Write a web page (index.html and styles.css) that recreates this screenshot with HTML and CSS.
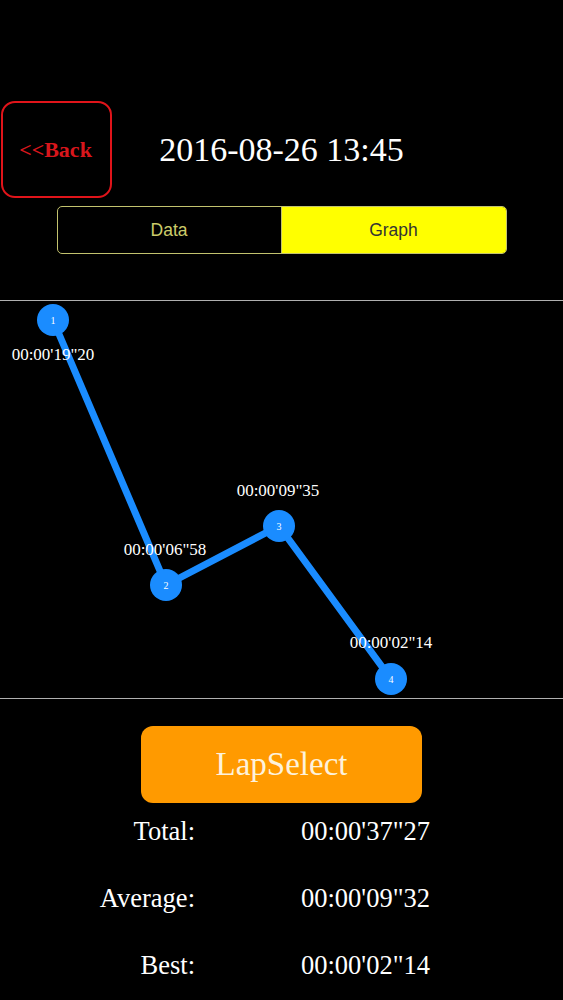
FILE: index.html
```html
<!DOCTYPE html>
<html>
<head>
<meta charset="utf-8">
<link rel="stylesheet" href="styles.css">
</head>
<body>
<div class="screen">
  <header class="header">
    <div class="back">&lt;&lt;Back</div>
    <h1 class="title">2016-08-26 13:45</h1>
    <div></div>
  </header>
  <div class="segment">
    <div class="seg seg-off">Data</div>
    <div class="seg seg-on">Graph</div>
  </div>
  <div class="chart">
    <svg class="chart-svg" width="563" height="397" viewBox="0 0 563 397">
      <polyline points="53,19 166,284 279,225 391,378" fill="none" stroke="#1a8cff" stroke-width="7" stroke-linejoin="round"/>
      <circle cx="53" cy="19" r="16" fill="#1a8cff"/>
      <circle cx="166" cy="284" r="16" fill="#1a8cff"/>
      <circle cx="279" cy="225" r="16" fill="#1a8cff"/>
      <circle cx="391" cy="378" r="16" fill="#1a8cff"/>
      <g class="num">
        <text x="53" y="23">1</text>
        <text x="166" y="288">2</text>
        <text x="279" y="229">3</text>
        <text x="391" y="382">4</text>
      </g>
      <g class="lbl">
        <text x="53" y="59">00:00'19"20</text>
        <text x="165" y="254">00:00'06"58</text>
        <text x="278" y="195">00:00'09"35</text>
        <text x="391" y="347">00:00'02"14</text>
      </g>
    </svg>
  </div>
  <div class="lap-btn">LapSelect</div>
  <div class="stats">
    <div class="stat-label">Total:</div><div class="stat-value">00:00'37"27</div>
    <div class="stat-label">Average:</div><div class="stat-value">00:00'09"32</div>
    <div class="stat-label">Best:</div><div class="stat-value">00:00'02"14</div>
  </div>
</div>
</body>
</html>
```
FILE: styles.css
```css
html, body {
  margin: 0;
  padding: 0;
  background: #000;
}
.screen {
  width: 563px;
  height: 1000px;
  background: #000;
  font-family: "Liberation Serif", serif;
  color: #fff;
  overflow: hidden;
}
.header {
  display: grid;
  grid-template-columns: 112px 1fr 112px;
  align-items: center;
  padding-top: 101px;
}
.back {
  box-sizing: border-box;
  margin-left: 1px;
  width: 111px;
  height: 97px;
  border: 2px solid #e0141a;
  border-radius: 14px;
  display: flex;
  align-items: center;
  justify-content: center;
  color: #d8161c;
  font-weight: bold;
  font-size: 22px;
  padding-right: 2px;
}
.title {
  margin: 0;
  text-align: center;
  font-weight: normal;
  font-size: 34px;
  line-height: 40px;
}
.segment {
  box-sizing: border-box;
  margin: 8px auto 0;
  width: 450px;
  height: 48px;
  border: 1px solid #c2c26e;
  border-radius: 5px;
  display: grid;
  grid-template-columns: 1fr 1fr;
  overflow: hidden;
  font-family: "Liberation Sans", Arial, sans-serif;
  font-size: 17.5px;
}
.seg {
  display: flex;
  align-items: center;
  justify-content: center;
}
.seg-off {
  color: #cccc6a;
  border-right: 1px solid #c2c26e;
}
.seg-on {
  background: #ffff00;
  color: #333;
}
.chart {
  margin-top: 46px;
  border-top: 1px solid #b0b0b0;
  border-bottom: 1px solid #b0b0b0;
  height: 397px;
}
.chart-svg {
  display: block;
}
.num text {
  fill: #fff;
  font-size: 10px;
  text-anchor: middle;
  font-family: "Liberation Serif", serif;
}
.lbl text {
  fill: #fff;
  font-size: 17px;
  text-anchor: middle;
  font-family: "Liberation Serif", serif;
}
.lap-btn {
  margin: 27px auto 0;
  width: 281px;
  height: 77px;
  border-radius: 12px;
  background: #ff9a00;
  color: #fdf2dc;
  font-size: 33px;
  display: flex;
  align-items: center;
  justify-content: center;
}
.stats {
  display: grid;
  grid-template-columns: 195px auto;
  column-gap: 106px;
  row-gap: 31px;
  margin-top: 10px;
  font-size: 26.5px;
  line-height: 36px;
}
.stat-label {
  text-align: right;
}
```
